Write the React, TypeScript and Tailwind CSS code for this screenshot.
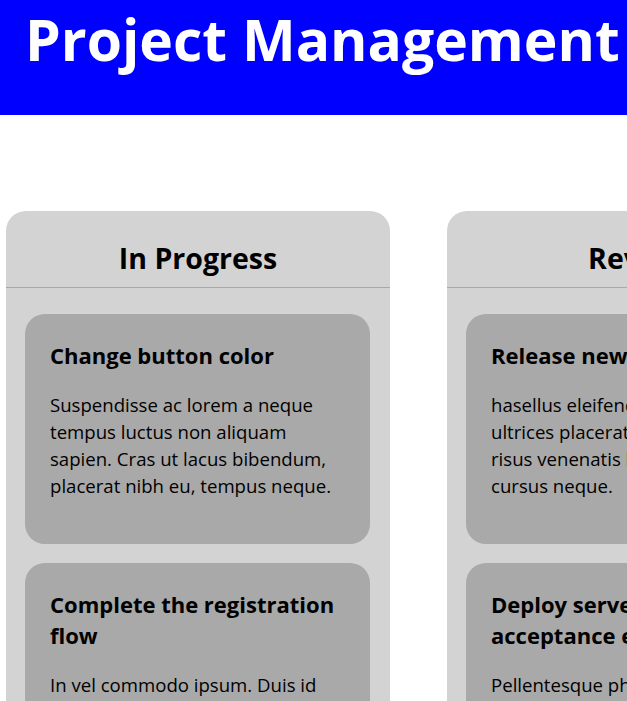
const columns = [
  {
    title: "In Progress",
    cards: [
      {
        title: "Change button color",
        body: "Suspendisse ac lorem a neque tempus luctus non aliquam sapien. Cras ut lacus bibendum, placerat nibh eu, tempus neque.",
      },
      {
        title: "Complete the registration flow",
        body: "In vel commodo ipsum. Duis id ligula quis nisi tincidunt sodales. Nulla facilisi. Morbi at ex vitae nulla luctus.",
      },
    ],
  },
  {
    title: "Review",
    cards: [
      {
        title: "Release new version",
        body: "hasellus eleifend quam et mi ultrices placerat augue, aliquam risus venenatis libero, ut a nisl cursus neque.",
      },
      {
        title: "Deploy server to acceptance environment",
        body: "Pellentesque pharetra nibh at lorem aliquet, sed dictum justo dictum.",
      },
    ],
  },
  {
    title: "Done",
    cards: [
      {
        title: "Write unit tests",
        body: "Nam pretium lectus sed nisi tempor, in cursus orci pretium.",
      },
    ],
  },
];

export default function App() {
  return (
    <div className="min-h-screen bg-white font-['Open_Sans',sans-serif] text-black overflow-hidden">
      {/* Header */}
      <header className="h-[115px] bg-[#0000ff] pl-[25px] pt-[5px]">
        <h1 className="whitespace-nowrap text-[57px] font-bold leading-[1.2] text-white">
          Project Management
        </h1>
      </header>

      <main className="flex gap-[57px] px-[6px] pt-[96px]">
        {columns.map((col) => (
          <section key={col.title} className="w-[384px] shrink-0 rounded-[20px] bg-[#d3d3d3]">
            <div className="border-b border-[#a9a9a9] pb-[9px] pt-[27px] text-center">
              <h2 className="text-[28.5px] font-bold leading-[40px]">{col.title}</h2>
            </div>
            <div className="flex flex-col gap-[19px] pl-[19px] pr-[20px] pt-[26px] pb-[20px]">
              {col.cards.map((card) => (
                <div key={card.title} className="rounded-[20px] bg-[#a9a9a9] px-[25px] pt-[26px] pb-[27px]">
                  <h3 className="mb-[20px] text-[22px] font-bold leading-[31px]">{card.title}</h3>
                  <p className="mb-[18px] text-[18.6px] leading-[27px]">{card.body}</p>
                </div>
              ))}
            </div>
          </section>
        ))}
      </main>
    </div>
  );
}
